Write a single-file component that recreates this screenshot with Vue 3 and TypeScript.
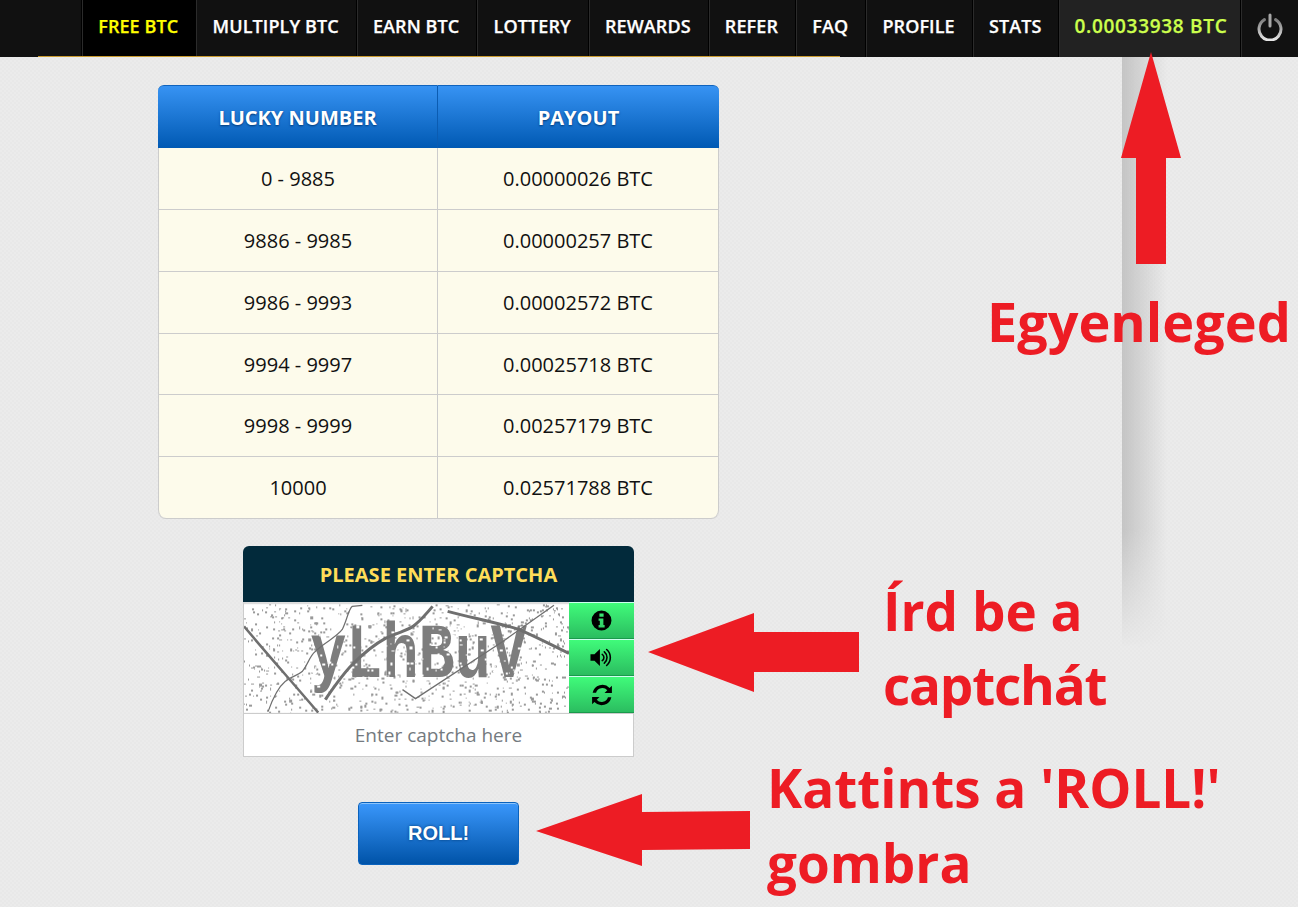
<script setup lang="ts">
const navItems = ['FREE BTC', 'MULTIPLY BTC', 'EARN BTC', 'LOTTERY', 'REWARDS', 'REFER', 'FAQ', 'PROFILE', 'STATS']
const rows = [
  ['0 - 9885', '0.00000026 BTC'],
  ['9886 - 9985', '0.00000257 BTC'],
  ['9986 - 9993', '0.00002572 BTC'],
  ['9994 - 9997', '0.00025718 BTC'],
  ['9998 - 9999', '0.00257179 BTC'],
  ['10000', '0.02571788 BTC'],
]
let seed = 7
const rnd = () => {
  seed = (seed * 16807) % 2147483647
  return seed / 2147483647
}
const specks = Array.from({ length: 950 }, () => ({
  x: Math.round(rnd() * 324),
  y: Math.round(rnd() * 108),
  w: 1 + Math.round(rnd() * 1.6),
  h: 1 + Math.round(rnd() * 1.6),
}))
const holes = Array.from({ length: 130 }, () => ({
  x: 68 + Math.round(rnd() * 215),
  y: 20 + Math.round(rnd() * 62),
  w: 1 + Math.round(rnd() * 2),
  h: 1 + Math.round(rnd() * 2),
}))
</script>

<template>
  <div class="page">
    <nav class="nav">
      <a v-for="(item, i) in navItems" :key="item" class="nav-item" :class="{ active: i === 0 }">{{ item }}</a>
      <a class="nav-item balance">0.00033938 BTC</a>
      <a class="nav-item power">
        <svg width="28" height="28" viewBox="0 0 28 28" fill="none" stroke-linecap="round">
          <defs>
            <linearGradient id="pw" x1="0" y1="0" x2="0" y2="1">
              <stop offset="0" stop-color="#7d7d7d" />
              <stop offset="1" stop-color="#e6e6e6" />
            </linearGradient>
          </defs>
          <path d="M8.4 6.6A11 11 0 1 0 19.6 6.6" stroke="url(#pw)" stroke-width="3" />
          <path d="M14 2V13" stroke="#a8a8a8" stroke-width="3" />
        </svg>
      </a>
    </nav>
    <div class="nav-line"></div>

    <main class="main">
      <table class="payout">
        <thead>
          <tr>
            <th>LUCKY NUMBER</th>
            <th>PAYOUT</th>
          </tr>
        </thead>
        <tbody>
          <tr v-for="r in rows" :key="r[0]">
            <td>{{ r[0] }}</td>
            <td>{{ r[1] }}</td>
          </tr>
        </tbody>
      </table>

      <section class="captcha">
        <h2 class="captcha-head">PLEASE ENTER CAPTCHA</h2>
        <div class="captcha-body">
          <svg class="captcha-img" viewBox="0 0 324 108">
            <rect width="324" height="108" fill="#fff" />
            <rect v-for="(s, i) in specks" :key="i" :x="s.x" :y="s.y" :width="s.w" :height="s.h" fill="#999" />
            <text class="captcha-text" transform="translate(66 72) scale(1 1.28)">yLhBuV</text>
            <rect v-for="(s, i) in holes" :key="'h' + i" :x="s.x" :y="s.y" :width="s.w" :height="s.h" fill="#fff" />
            <g fill="none" stroke="#6f6f6f">
              <path d="M0 22C15 40 50 80 74 108" stroke-width="2.5" />
              <path d="M24 107C30 90 35 82 41 77C50 70 52 72 58 67C64 60 65 52 71 47C80 38 92 33 98 25C103 15 104 5 108 2L118 1" stroke-width="1.2" />
              <path d="M81 95C90 82 98 70 108 60C120 48 130 40 141 34C155 27 165 26 171 20C178 14 183 8 188 2" stroke-width="3" />
              <path d="M203 7C230 14 255 19 274 25C290 32 308 41 324 49" stroke-width="3" />
              <path d="M158 85L171 94L258 37L309 1" stroke-width="1.3" />
            </g>
          </svg>
          <div class="captcha-btns">
            <button class="cap-btn">
              <svg width="21" height="21" viewBox="0 0 20 20">
                <path fill-rule="evenodd" d="M10 .5a9.5 9.5 0 1 0 0 19a9.5 9.5 0 0 0 0-19ZM8 3.4h4v3H8ZM7.2 8h4.6v6.4H13v2.2H7.2v-2.2h1.2v-4.2H7.2Z" />
              </svg>
            </button>
            <button class="cap-btn">
              <svg width="23" height="21" viewBox="0 0 21 20">
                <path d="M0 6.8h3.8L9 2v16l-5.2-4.8H0Z" />
                <path d="M11.2 7a3.6 3.6 0 0 1 0 6M13.2 4.6a7 7 0 0 1 0 10.8M15.4 2.4a10 10 0 0 1 0 15.2" fill="none" stroke="#000" stroke-width="1.5" stroke-linecap="round" />
              </svg>
            </button>
            <button class="cap-btn">
              <svg width="22" height="22" viewBox="0 0 20 20">
                <path d="M19 1.5v6.7h-6.7l2.5-2.5A6 6 0 0 0 4.6 8H1.5A9 9 0 0 1 16.9 3.6Z" />
                <path d="M1 18.5v-6.7h6.7l-2.5 2.5A6 6 0 0 0 15.4 12h3.1A9 9 0 0 1 3.1 16.4Z" />
              </svg>
            </button>
          </div>
        </div>
        <input class="captcha-input" type="text" placeholder="Enter captcha here" />
      </section>

      <button class="roll">ROLL!</button>
    </main>

    <div class="shade"></div>

    <svg class="arrows" width="1298" height="907" viewBox="0 0 1298 907">
      <path d="M1151 52L1181 158H1166V264H1136V158H1121Z" />
      <path d="M648 652L754 613V632H859V672H754V692Z" />
      <path d="M536 831L642 794V812L750 811V849L642 850V866Z" />
    </svg>
    <div class="note note-balance">Egyenleged</div>
    <div class="note note-captcha">Írd be a<br /><span class="tight">captchát</span></div>
    <div class="note note-roll">Kattints a 'ROLL!'<br />gombra</div>
  </div>
</template>

<style>
html,
body {
  margin: 0;
  background: #e9e9e9;
}
</style>

<style scoped>
.page {
  position: relative;
  width: 1298px;
  height: 907px;
  overflow: hidden;
  background-color: #e9e9e9;
  background-image: repeating-conic-gradient(#ebebeb 0 25%, #e8e8e8 0 50%);
  background-size: 4px 4px;
  font-family: "Open Sans", "Noto Sans", sans-serif;
}
.nav {
  display: flex;
  height: 57px;
  padding-left: 81px;
  background: #111;
}
.nav-item {
  display: flex;
  align-items: center;
  padding: 0 17px 6px 16.2px;
  border-left: 1px solid #000;
  box-shadow: inset 1px 0 0 #2b2b2b;
  color: #fff;
  font-size: 18px;
  font-weight: 600;
  letter-spacing: 0.1px;
  -webkit-text-stroke: 0.25px currentColor;
  white-space: nowrap;
}
.active {
  background: #000;
  color: #ff0;
}
.balance {
  background: #222;
  color: #ccff4d;
  padding: 0 13px 6px 15px;
  font-size: 19px;
  letter-spacing: 0.7px;
}
.power {
  flex: 1;
  justify-content: center;
  padding: 0 0 4px;
}
.nav-line {
  position: absolute;
  left: 38px;
  top: 56px;
  width: 802px;
  height: 1px;
  background: #c99a2e;
}
.main {
  display: flex;
  flex-direction: column;
  align-items: flex-start;
  padding: 28px 0 0 158px;
}
.payout {
  width: 561px;
  table-layout: fixed;
  border-collapse: separate;
  border-spacing: 0;
  border-radius: 8px;
  border-bottom: 1px solid #ccc;
  box-sizing: border-box;
}
.payout th {
  height: 62px;
  padding: 0;
  background: linear-gradient(#3793f3, #0059b3);
  border-top: 1px solid #0f63bd;
  color: #fff;
  font-size: 20px;
  font-weight: 700;
  text-shadow: 0 1px 2px #003a78;
}
.payout th:first-child {
  width: 279px;
  border-top-left-radius: 6px;
  border-right: 1px solid #0b5cb2;
}
.payout th:last-child {
  border-top-right-radius: 6px;
}
.payout td {
  height: 61px;
  padding: 0;
  background: #fdfbeb;
  border-bottom: 1px solid #ccc;
  color: #111;
  font-size: 20px;
  text-align: center;
}
.payout tbody tr:nth-child(4) td {
  height: 60px;
}
.payout tbody tr:last-child td {
  border-bottom: 0;
}
.payout td:first-child {
  border-left: 1px solid #ccc;
  border-right: 1px solid #ccc;
}
.payout td:last-child {
  border-right: 1px solid #ccc;
}
.payout tbody tr:last-child td:first-child {
  border-bottom-left-radius: 8px;
}
.payout tbody tr:last-child td:last-child {
  border-bottom-right-radius: 8px;
}
.captcha {
  width: 391px;
  margin: 27px 0 0 85px;
}
.captcha-head {
  margin: 0;
  height: 56px;
  line-height: 58px;
  background: #022a3b;
  border-radius: 6px 6px 0 0;
  color: #ffde59;
  font-size: 20px;
  font-weight: 700;
  text-align: center;
}
.captcha-body {
  display: flex;
  height: 112px;
  box-sizing: border-box;
  border-bottom: 1px solid #ccc;
}
.captcha-img {
  display: block;
  flex: none;
  width: 326px;
  height: 111px;
  box-sizing: border-box;
  border-left: 1px solid #ccc;
  border-top: 2px solid #ddd;
}
.captcha-text {
  font-family: "Liberation Mono", monospace;
  font-size: 60px;
  font-weight: 700;
  fill: #7d7d7d;
}
.captcha-btns {
  flex: 1;
  display: flex;
  flex-direction: column;
}
.cap-btn {
  flex: 1;
  display: flex;
  align-items: center;
  justify-content: center;
  padding: 0;
  border: 0;
  border-top: 1px solid #cfe;
  border-bottom: 1px solid #1a9a4c;
  background: linear-gradient(#40fb7a, #2bbd60);
}
.captcha-input {
  display: block;
  width: 100%;
  height: 43px;
  box-sizing: border-box;
  border: 1px solid #ccc;
  border-top: 0;
  outline: 0;
  background: #fff;
  font-family: inherit;
  font-size: 19px;
  text-align: center;
}
.captcha-input::placeholder {
  color: #747a80;
  opacity: 1;
}
.roll {
  width: 161px;
  height: 63px;
  margin: 45px 0 0 200px;
  padding: 0;
  border: 1px solid #0a62bd;
  border-radius: 4px;
  background: linear-gradient(#3a97fb, #0053a8);
  box-shadow: inset 0 1px 0 #8cc4fb;
  color: #fff;
  font-family: "Liberation Sans", Arial, sans-serif;
  font-size: 20px;
  font-weight: 700;
  text-shadow: 0 0 3px #003a78;
}
.shade {
  position: absolute;
  left: 1122px;
  top: 57px;
  width: 60px;
  height: 590px;
  background: linear-gradient(90deg, #c4c4c4, rgba(233, 233, 233, 0) 75%);
  -webkit-mask-image: linear-gradient(#000 80%, transparent);
  mask-image: linear-gradient(#000 80%, transparent);
}
.arrows {
  position: absolute;
  left: 0;
  top: 0;
  fill: #ed1c24;
}
.note {
  position: absolute;
  color: #ed1c24;
  font-weight: 700;
  white-space: nowrap;
}
.tight {
  letter-spacing: -1.2px;
}
.note-balance {
  left: 987px;
  top: 283px;
  font-size: 54px;
  line-height: 76px;
}
.note-captcha {
  left: 883px;
  top: 574px;
  font-size: 53px;
  line-height: 74px;
}
.note-roll {
  left: 767px;
  top: 750px;
  font-size: 53px;
  line-height: 75px;
}
</style>
